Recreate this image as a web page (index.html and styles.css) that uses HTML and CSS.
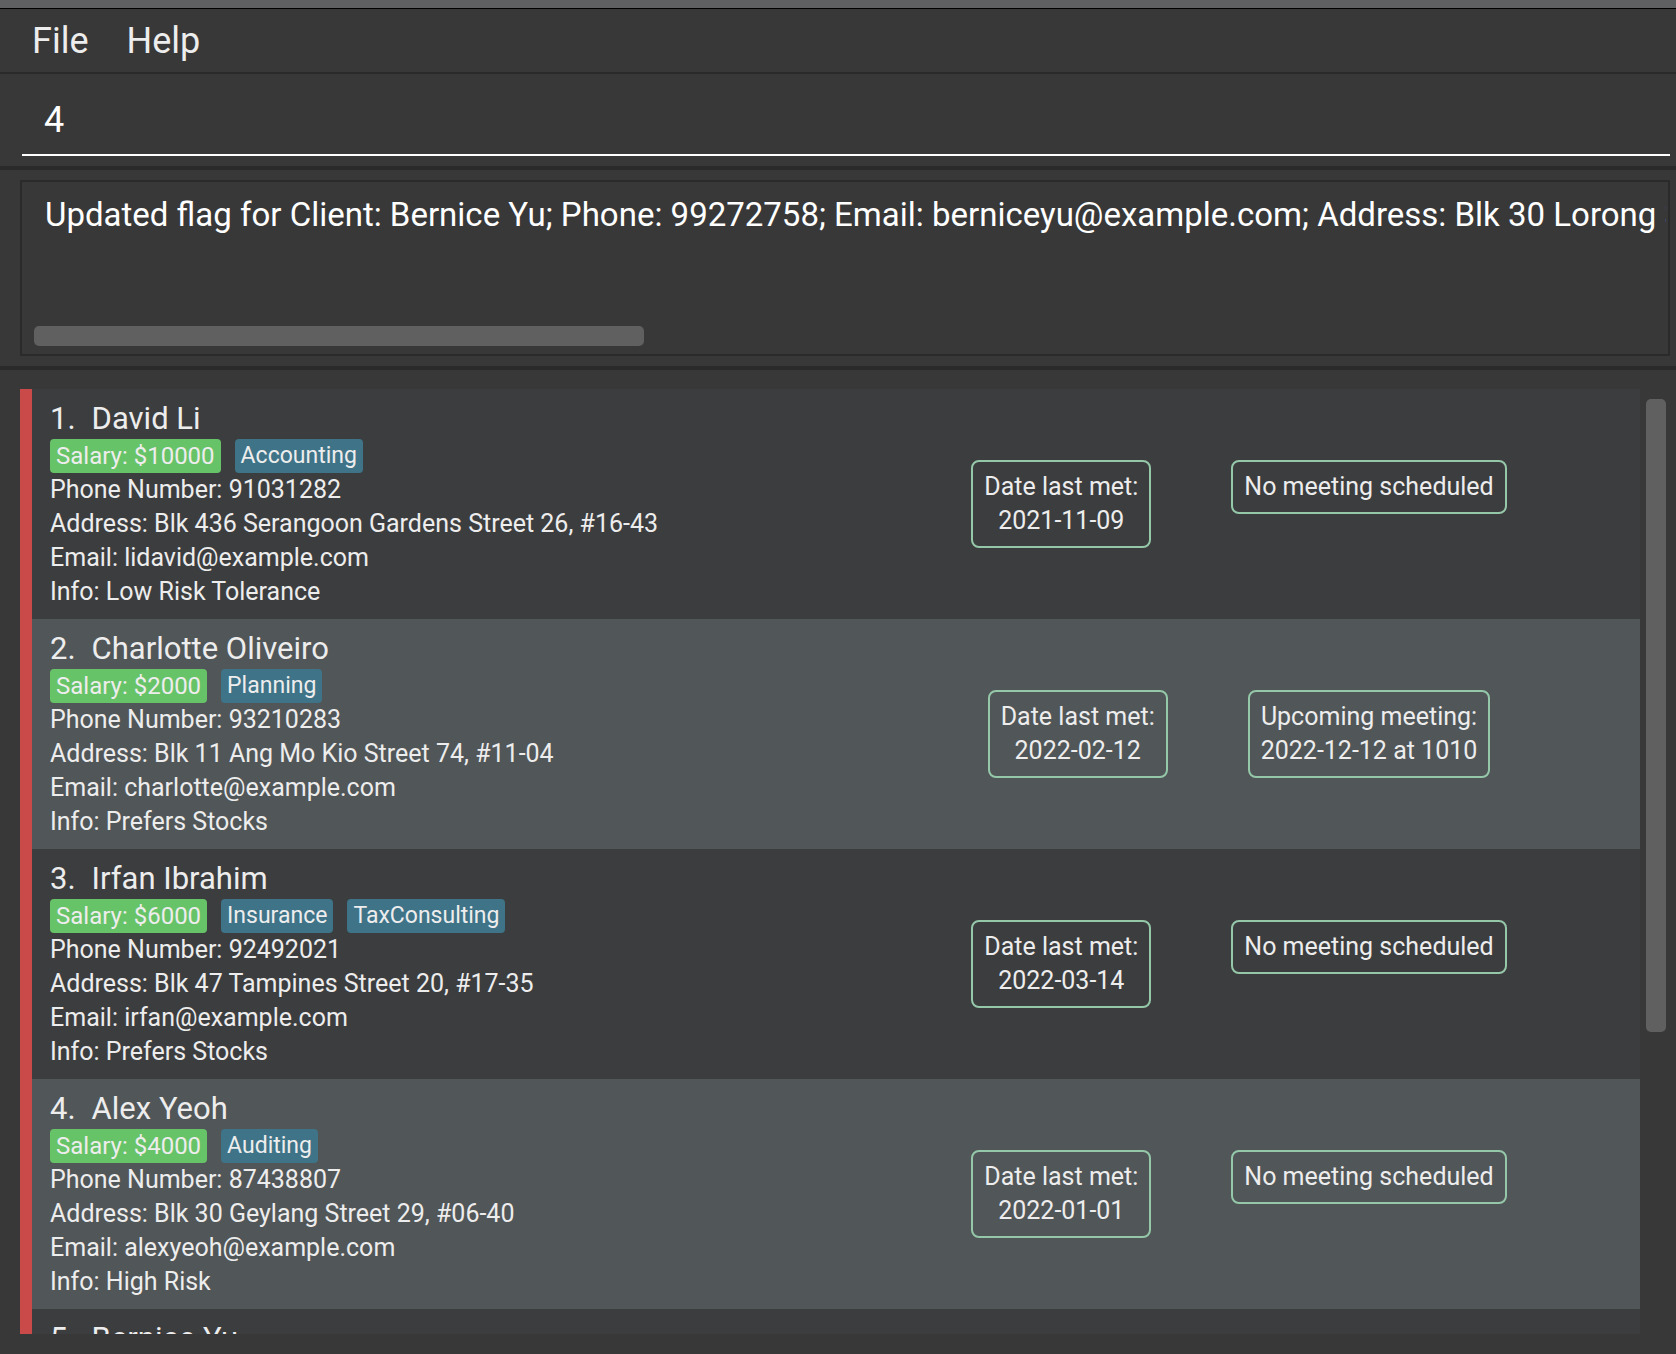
FILE: index.html
```html
<!DOCTYPE html>
<html lang="en">
<head>
<meta charset="utf-8">
<title>Clients</title>
<link rel="stylesheet" href="styles.css">
</head>
<body>
<div class="title-strip"></div>
<nav class="menu-bar">
  <button class="menu" type="button">File</button>
  <button class="menu" type="button">Help</button>
</nav>
<form class="command-pane">
  <input class="command" type="text" value="4" aria-label="Command">
</form>
<section class="result-pane">
  <div class="result-box">
    <textarea class="result" wrap="off" rows="1" readonly aria-label="Result">Updated flag for Client: Bernice Yu; Phone: 99272758; Email: berniceyu@example.com; Address: Blk 30 Lorong 3</textarea>
    <div class="thumb thumb-x"></div>
  </div>
</section>
<main class="list-pane">
  <ol class="clients">
    <li class="client">
      <div class="details">
        <h2 class="name"><span>1.</span><span>David Li</span></h2>
        <div class="tags"><span class="tag salary">Salary: $10000</span><span class="tag">Accounting</span></div>
        <p>Phone Number: 91031282</p>
        <p>Address: Blk 436 Serangoon Gardens Street 26, #16-43</p>
        <p>Email: lidavid@example.com</p>
        <p>Info: Low Risk Tolerance</p>
      </div>
      <div class="meetings"><div class="meeting">Date last met:<br>2021-11-09</div><div class="meeting">No meeting scheduled</div></div>
    </li>
    <li class="client">
      <div class="details">
        <h2 class="name"><span>2.</span><span>Charlotte Oliveiro</span></h2>
        <div class="tags"><span class="tag salary">Salary: $2000</span><span class="tag">Planning</span></div>
        <p>Phone Number: 93210283</p>
        <p>Address: Blk 11 Ang Mo Kio Street 74, #11-04</p>
        <p>Email: charlotte@example.com</p>
        <p>Info: Prefers Stocks</p>
      </div>
      <div class="meetings"><div class="meeting">Date last met:<br>2022-02-12</div><div class="meeting">Upcoming meeting:<br>2022-12-12 at 1010</div></div>
    </li>
    <li class="client">
      <div class="details">
        <h2 class="name"><span>3.</span><span>Irfan Ibrahim</span></h2>
        <div class="tags"><span class="tag salary">Salary: $6000</span><span class="tag">Insurance</span><span class="tag">TaxConsulting</span></div>
        <p>Phone Number: 92492021</p>
        <p>Address: Blk 47 Tampines Street 20, #17-35</p>
        <p>Email: irfan@example.com</p>
        <p>Info: Prefers Stocks</p>
      </div>
      <div class="meetings"><div class="meeting">Date last met:<br>2022-03-14</div><div class="meeting">No meeting scheduled</div></div>
    </li>
    <li class="client">
      <div class="details">
        <h2 class="name"><span>4.</span><span>Alex Yeoh</span></h2>
        <div class="tags"><span class="tag salary">Salary: $4000</span><span class="tag">Auditing</span></div>
        <p>Phone Number: 87438807</p>
        <p>Address: Blk 30 Geylang Street 29, #06-40</p>
        <p>Email: alexyeoh@example.com</p>
        <p>Info: High Risk</p>
      </div>
      <div class="meetings"><div class="meeting">Date last met:<br>2022-01-01</div><div class="meeting">No meeting scheduled</div></div>
    </li>
    <li class="client">
      <div class="details">
        <h2 class="name"><span>5.</span><span>Bernice Yu</span></h2>
      </div>
    </li>
  </ol>
  <div class="track"><div class="thumb thumb-y"></div></div>
</main>
</body>
</html>
```
FILE: styles.css
```css
* { box-sizing: border-box; }

body {
  display: flex;
  flex-direction: column;
  height: 100vh;
  margin: 0;
  overflow: hidden;
  background: #383838;
  color: #ededed;
  font-family: Roboto, "Liberation Sans", sans-serif;
  font-size: 25px;
  line-height: 34px;
}

h2, p, ol { margin: 0; padding: 0; }

.title-strip {
  flex: none;
  height: 9px;
  background: #5f6062;
  border-bottom: 1px solid #000;
}

.menu-bar {
  display: flex;
  flex: none;
  gap: 38px;
  padding: 12px 32px 11px;
  border-bottom: 2px solid #2a2a2a;
}

.menu {
  padding: 0;
  border: 0;
  background: none;
  color: inherit;
  font: 36px/40px Roboto, "Liberation Sans", sans-serif;
}

.command-pane {
  flex: none;
  padding: 16px 6px 10px 22px;
  border-bottom: 4px solid #2a2a2a;
}

.command {
  display: block;
  width: 100%;
  height: 66px;
  padding: 0 22px 4px;
  border: 0;
  border-bottom: 2px solid #fff;
  outline: 0;
  background: none;
  color: #fff;
  font: 36px/40px Roboto, "Liberation Sans", sans-serif;
}

.result-pane {
  flex: none;
  padding: 10px 6px 10px 20px;
  border-bottom: 4px solid #2a2a2a;
}

.result-box {
  display: flex;
  flex-direction: column;
  justify-content: space-between;
  height: 176px;
  padding: 11px 2px 8px 12px;
  border: 2px solid #2a2a2a;
}

.result {
  display: block;
  width: 100%;
  height: 44px;
  padding: 0 0 0 11px;
  border: 0;
  outline: 0;
  overflow: hidden;
  resize: none;
  background: none;
  color: #fff;
  font: 33px/44px Roboto, "Liberation Sans", sans-serif;
}

.thumb {
  border-radius: 5px;
  background: #606060;
}

.thumb-x {
  width: 37.4%;
  height: 20px;
}

.list-pane {
  display: flex;
  flex: 1;
  min-height: 0;
  padding: 19px 10px 20px 20px;
}

.clients {
  flex: 1;
  overflow: hidden;
  border-left: 12px solid #c94a49;
  background: #3c3d3f;
  list-style: none;
}

.client {
  display: grid;
  grid-template-columns: 1fr 802px;
  align-items: center;
  padding: 10px 0 10px 18px;
  background: #3c3d3f;
}

.client:nth-child(even) { background: #515658; }

.name {
  display: flex;
  gap: 16px;
  font-size: 31px;
  font-weight: 400;
  line-height: 40px;
}

.tags {
  display: flex;
  gap: 14px;
}

.tag {
  padding: 0 6px;
  border-radius: 4px;
  background: #3e7388;
  font-size: 23px;
}

.salary {
  background: #67c368;
  font-size: 24px;
}

.meetings {
  display: flex;
  align-items: flex-start;
  justify-content: center;
  gap: 80px;
}

.meeting {
  padding: 8px 11px;
  border: 2px solid #95c7a9;
  border-radius: 8px;
  text-align: center;
}

.track {
  flex: none;
  width: 26px;
  padding: 10px 0 0 6px;
}

.thumb-y {
  height: 67.7%;
}
```
